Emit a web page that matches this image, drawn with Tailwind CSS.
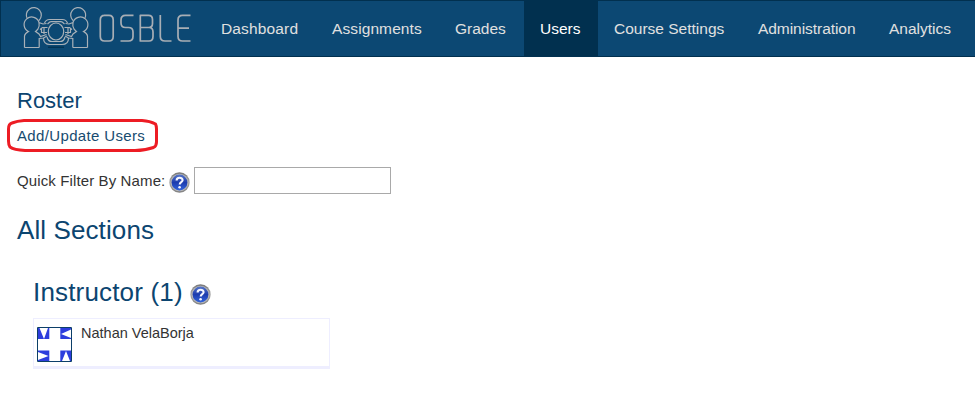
<!DOCTYPE html>
<html lang="en">
<head>
<meta charset="utf-8">
<title>OSBLE - Users</title>
<script src="https://cdn.jsdelivr.net/npm/@tailwindcss/browser@4"></script>
</head>
<body class="bg-white text-[#333] font-['Liberation_Sans',Arial,sans-serif] w-[975px] h-[402px] overflow-hidden">
<svg class="absolute" width="0" height="0">
  <defs>
    <linearGradient id="rim" x1="0" y1="0" x2="0" y2="1"><stop offset="0" stop-color="#777"/><stop offset=".5" stop-color="#aaa"/><stop offset="1" stop-color="#808080"/></linearGradient>
    <linearGradient id="blue" x1="0" y1="0" x2="0" y2="1"><stop offset="0" stop-color="#5575c8"/><stop offset=".5" stop-color="#1c3cae"/><stop offset="1" stop-color="#3264dc"/></linearGradient>
    <symbol id="help" viewBox="0 0 21 21">
      <circle cx="10.5" cy="10.5" r="10.2" fill="url(#rim)"/>
      <circle cx="10.5" cy="10.5" r="8.8" fill="#b9b9b9"/>
      <circle cx="10.5" cy="10.5" r="7.9" fill="url(#blue)"/>
      <path d="M7.6 8.4C7.6 4.9 13.7 4.9 13.6 8.3C13.5 10.2 10.7 10.3 10.7 12.6" fill="none" stroke="#f4f6ff" stroke-width="2.1"/>
      <circle cx="10.6" cy="15.3" r="1.3" fill="#f4f6ff"/>
    </symbol>
    <symbol id="person" viewBox="0 0 112 56" overflow="visible">
      <path d="M27.300 18.800A7.500 7.500 0 1 1 39 20.500"/>
      <path d="M24.500 47.500V36Q24.800 33.500 28.500 31.500A7.600 7.600 0 1 1 39 22.500L43 24L46.500 23.500M39 22.500Q39.800 26.500 38 29Q36.500 30.800 35.500 31.500L39 34L40.500 36.500L46.500 34.500M39.200 47.500V38.500L43.500 38L47 36M24.500 47.500H39.200M40 29.500L42.500 27.500H47.500M41 32.500H47M41.500 28V32.500M44 28V34"/>
    </symbol>
  </defs>
</svg>
<header class="h-[57px] bg-[#0c4873] border-y border-l border-[#01304f] flex">
  <a class="w-[204px] shrink-0">
    <svg class="block" width="204" height="55" viewBox="1 1 204 55" fill="none" stroke="#a9b1b8" stroke-width="1.2">
      <use href="#person" width="112" height="56"/>
      <g transform="translate(112 0) scale(-1 1)"><use href="#person" width="112" height="56"/></g>
      <ellipse cx="56" cy="31.500" rx="7.700" ry="8.500"/>
      <path d="M44.500 23Q46 19.500 49.500 19.500H62.500Q66 19.500 67.500 23M47.500 24Q50 21.700 51 21.700H61Q62 21.700 64.500 24M43.500 38Q43.500 44.500 50 44.500H62Q68.500 44.500 68.500 38M47 37Q48 41.500 52 41.500H60Q64 41.500 65 37"/>
      <path d="M48 47.200H64" stroke="#01304f"/>
      <g stroke="#a8aeb5" stroke-width="1.700" stroke-linejoin="round">
        <path d="M104 15.300H109Q113.200 15.300 113.200 20V36.500Q113.200 41 109 41H104.500Q100.300 41 100.300 36.500V20Q100.300 15.300 104.500 15.300Z"/>
        <path d="M133.500 15.300H125.500Q121 15.300 121 20V23Q121 27.500 125.500 27.500H128.500Q133 27.500 133 32V36.500Q133 41 128.500 41H120.500"/>
        <path d="M140.300 15.300H148.500Q152.500 15.300 152.500 19.500V23.500Q152.500 27.500 148.500 27.500H140.300V15.300V41H149Q153 41 153 36.500V32Q153 27.500 149 27.500"/>
        <path d="M160.300 15V36.500Q160.300 41 165 41H171.500"/>
        <path d="M190.500 15.300H182.500Q178 15.300 178 20V36.500Q178 41 182.500 41H190.500M178 28.200H189"/>
      </g>
    </svg>
  </a>
  <nav class="flex text-[15.500px] leading-[55px] text-[#e0e0e0] whitespace-nowrap">
    <a class="w-[111px] pl-4 tracking-[0.150px]">Dashboard</a>
    <a class="w-[123px] pl-4 tracking-[0.100px]">Assignments</a>
    <a class="w-[85px] pl-4">Grades</a>
    <a class="w-[74px] pl-4 bg-[#01304f] text-white">Users</a>
    <a class="w-[144px] pl-4">Course Settings</a>
    <a class="w-[131px] pl-4 -tracking-[0.050px]">Administration</a>
    <a class="w-[102px] pl-4">Analytics</a>
  </nav>
</header>
<main class="pl-[17px] whitespace-nowrap">
  <h1 class="pt-[31px] text-[22px] leading-[26px] text-[#0c4570]">Roster</h1>
  <div class="relative mt-[13px] h-[18px] text-[15px] leading-[18px] tracking-[0.35px] text-[#174b70]">
    <a>Add/Update Users</a>
    <svg class="absolute -left-[10px] -top-[9px]" width="152" height="35" fill="none" stroke="#ed1c24" stroke-width="3"><path d="M17 2.500H135Q143 3 148.500 6Q149.500 8 149.500 11V24Q149.500 28 146.500 29.500Q138 32.500 128 32.500H18Q7 32 3 29Q1.500 27 1.500 23V11Q1.500 6 5 5Q10 3 17 2.500Z"/></svg>
  </div>
  <div class="mt-[22px] flex h-[27px]">
    <label class="w-[152px] pt-[5px] text-[15px] leading-[18px] tracking-[0.120px]">Quick Filter By Name:</label>
    <svg class="mt-[5px] mr-1 shrink-0" width="21" height="21"><use href="#help"/></svg>
    <input class="w-[197px] h-[27px] border border-[#a9a9a9] bg-white" type="text">
  </div>
  <h2 class="mt-[21px] text-[26px] leading-[30px] tracking-[0.100px] text-[#0c4570]">All Sections</h2>
  <section class="pl-4 pt-8">
    <h2 class="flex text-[26px] leading-[30px] tracking-[0.170px] text-[#0c4570]"><span class="w-[157px]">Instructor (1)</span>
      <svg class="mt-[7px]" width="21" height="21"><use href="#help"/></svg></h2>
    <div class="mt-[11px] flex w-[297px] h-[51px] border border-b-3 border-[#eeeeff]">
      <svg class="ml-[3px] mt-2" width="35" height="35" viewBox="0 0 35 35"><path fill="#2d3ddd" d="M1 1H12.300V12H1ZM23.300 1H34V12H23.300ZM1 23.500H12.300V34H1ZM23.300 23.500H34V34H23.300Z"/><path fill="#fff" d="M2.500 1H11L7 12ZM34 2.500V11L24 7ZM1 25V33L11.500 29ZM25 34H33L29 24Z"/><path fill="none" stroke="#0c3f68" d="M.5.5H34.500V34.500H.5Z"/></svg>
      <span class="ml-[9px] mt-[5px] text-[14.500px] leading-[18px]">Nathan VelaBorja</span>
    </div>
  </section>
</main>
</body>
</html>
